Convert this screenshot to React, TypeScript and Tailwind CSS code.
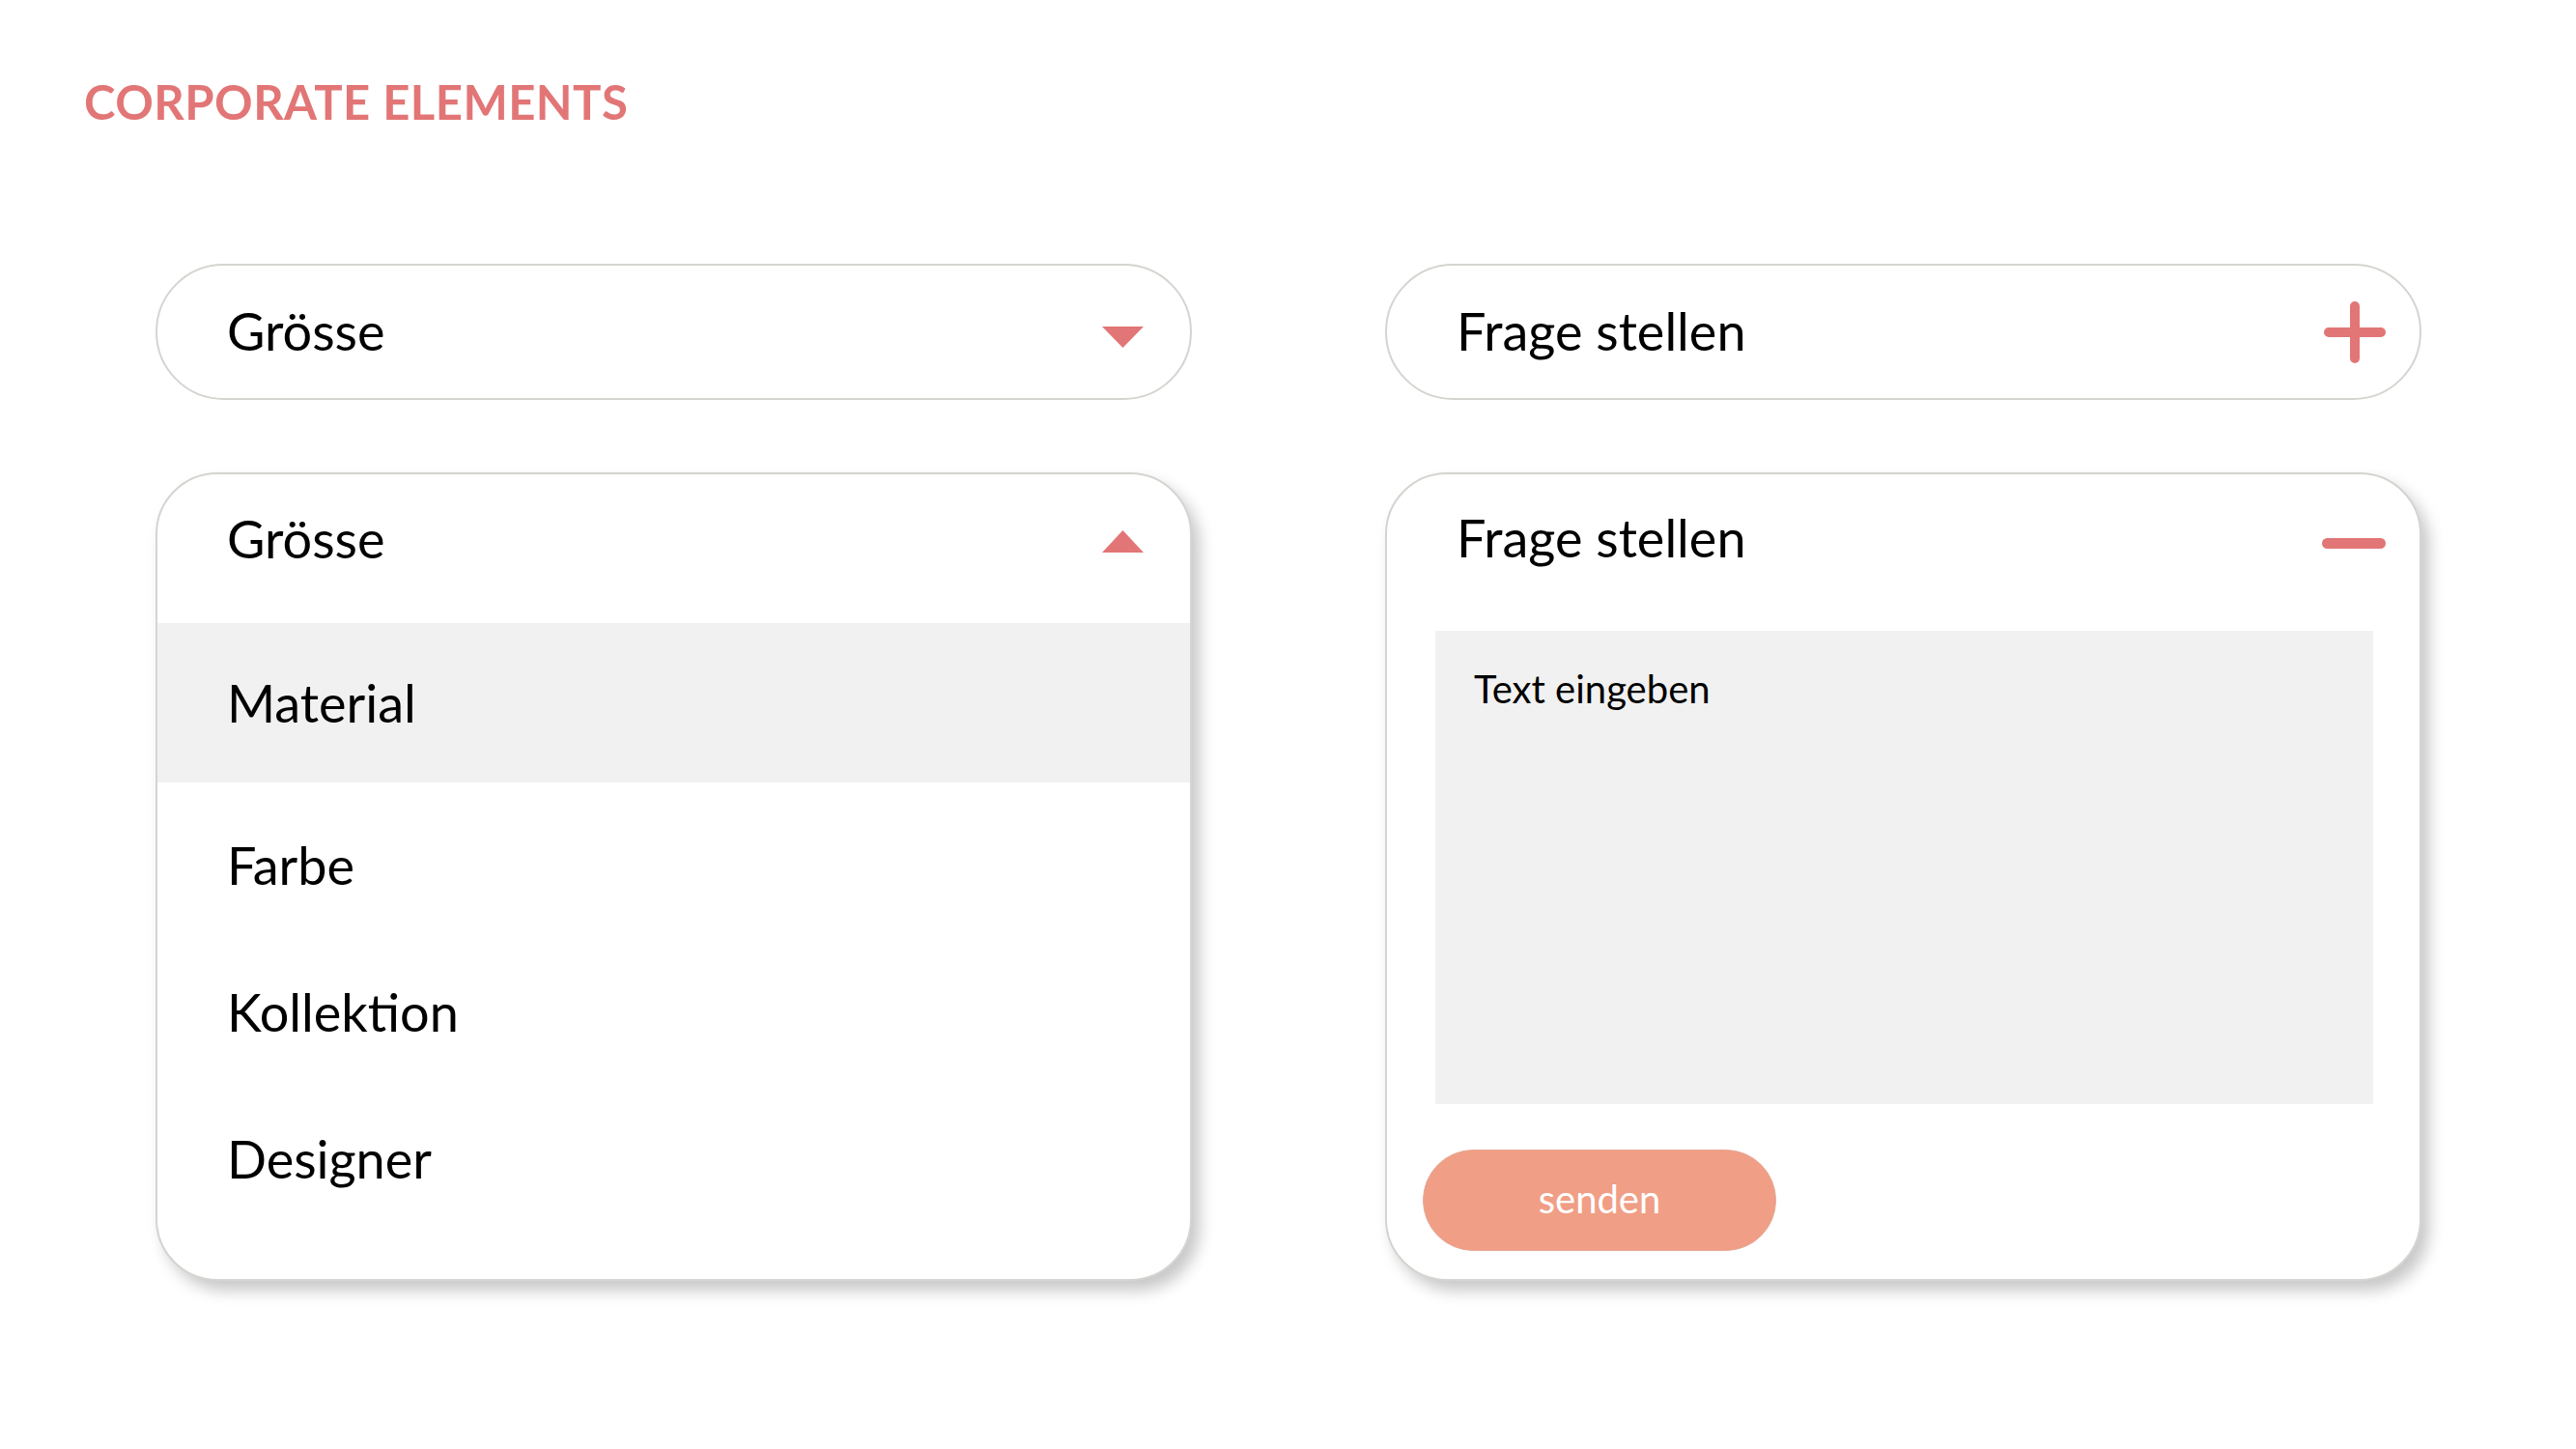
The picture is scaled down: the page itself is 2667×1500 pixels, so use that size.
import React from 'react'

const font = { fontFamily: 'Lato, "Noto Sans", sans-serif' }

const TriangleDown = () => (
    <svg width="43" height="22" viewBox="0 0 43 22" className="block">
        <polygon points="0,0 43,0 21.5,22" fill="#e27676" />
    </svg>
)

const TriangleUp = () => (
    <svg width="43" height="23" viewBox="0 0 43 23" className="block">
        <polygon points="21.5,0 43,23 0,23" fill="#e27676" />
    </svg>
)

const Plus = () => (
    <svg width="64" height="64" viewBox="0 0 64 64" className="block">
        <path d="M32 5 V59 M5 32 H59" stroke="#e27676" strokeWidth="10" strokeLinecap="round" />
    </svg>
)

const Minus = () => (
    <svg width="66" height="11" viewBox="0 0 66 11" className="block">
        <path d="M5.5 5.5 H60.5" stroke="#e27676" strokeWidth="11" strokeLinecap="round" />
    </svg>
)

const items = ['Farbe', 'Kollektion', 'Designer']

const App = () => {
    return (
        <div className="w-[2667px] h-[1500px] bg-white text-black" style={font}>
            <div className="pt-[81px] pl-[87px]">
                <h1 className="text-[49px] leading-none font-bold tracking-[0.01em] text-[#e27676]">
                    CORPORATE ELEMENTS
                </h1>
            </div>

            <div className="mt-[143px] pl-[161px] grid grid-cols-[1073px_1073px] grid-rows-[141px_837px] gap-x-[200px] gap-y-[75px]">
                {/* closed select */}
                <div className="rounded-full border-2 border-[#d6d4d0] flex items-center justify-between pl-[72px] pr-[48px]">
                    <span className="text-[54px] leading-none -mt-[2px]">Grösse</span>
                    <div className="mt-[10px]">
                        <TriangleDown />
                    </div>
                </div>

                {/* closed accordion */}
                <div className="rounded-full border-2 border-[#d6d4d0] flex items-center justify-between pl-[72px] pr-[35px]">
                    <span className="text-[54px] leading-none -mt-[2px]">Frage stellen</span>
                    <Plus />
                </div>

                {/* open select */}
                <div className="rounded-[64px] border-2 border-[#d6d4d0] bg-white overflow-hidden flex flex-col shadow-[8px_10px_16px_rgba(0,0,0,0.22)]">
                    <div className="h-[154px] flex items-start justify-between pt-[40px] pl-[72px] pr-[48px]">
                        <span className="text-[54px] leading-none">Grösse</span>
                        <div className="mt-[18px]">
                            <TriangleUp />
                        </div>
                    </div>
                    <div className="h-[165px] bg-[#f1f1f1] flex items-center pl-[72px]">
                        <span className="text-[54px] leading-none">Material</span>
                    </div>
                    <div className="h-[10px]" />
                    {items.map((item) => (
                        <div key={item} className="h-[152px] flex items-center pl-[72px]">
                            <span className="text-[54px] leading-none">{item}</span>
                        </div>
                    ))}
                </div>

                {/* open accordion */}
                <div className="rounded-[64px] border-2 border-[#d6d4d0] bg-white flex flex-col shadow-[8px_10px_16px_rgba(0,0,0,0.22)]">
                    <div className="h-[162px] flex items-start justify-between pt-[39px] pl-[72px] pr-[35px]">
                        <span className="text-[54px] leading-none">Frage stellen</span>
                        <div className="mt-[27px]">
                            <Minus />
                        </div>
                    </div>
                    <div className="ml-[50px] mr-[48px] h-[490px] bg-[#f1f1f1] pt-[40px] pl-[40px]">
                        <span className="text-[40px] leading-none">Text eingeben</span>
                    </div>
                    <div className="mt-[47px] ml-[37px]">
                        <button className="w-[366px] h-[105px] rounded-full bg-[#f09e85] border border-[#e6a895] text-white text-[40px] leading-none flex items-center justify-center pb-[4px]">
                            senden
                        </button>
                    </div>
                </div>
            </div>
        </div>
    )
}

export default App
